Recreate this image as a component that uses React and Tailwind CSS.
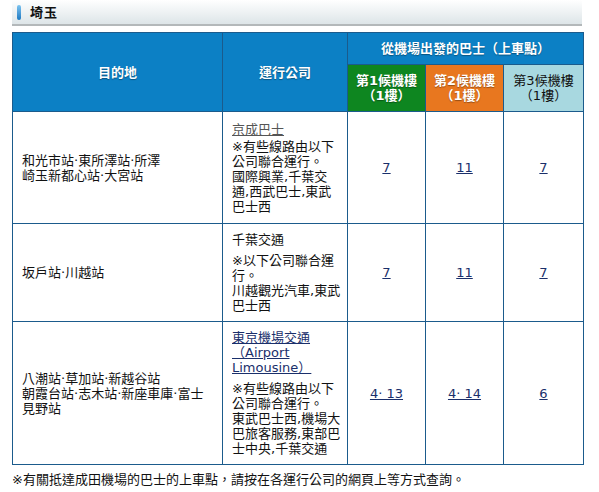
import React from 'react';

const font = { fontFamily: '"DejaVu Sans", "Noto Sans CJK TC", sans-serif' };

const rows = [
    {
        dest: ['和光市站‧東所澤站‧所澤', '崎玉新都心站‧大宮站'],
        company: '京成巴士',
        link: 'gray',
        note: ['※有些線路由以下', '公司聯合運行。', '國際興業,千葉交', '通,西武巴士,東武', '巴士西'],
        stops: ['7', '11', '7'],
        h: 'h-[112px]',
    },
    {
        dest: ['坂戶站‧川越站'],
        company: '千葉交通',
        link: null,
        note: ['※以下公司聯合運', '行。', '川越觀光汽車,東武', '巴士西'],
        stops: ['7', '11', '7'],
        h: 'h-[97px]',
    },
    {
        dest: ['八潮站‧草加站‧新越谷站', '朝霞台站‧志木站‧新座車庫‧富士', '見野站'],
        company: ['東京機場交通', '（Airport', 'Limousine）'],
        link: 'blue',
        note: ['※有些線路由以下', '公司聯合運行。', '東武巴士西,機場大', '巴旅客服務,東部巴', '士中央,千葉交通'],
        stops: ['4‧ 13', '4‧ 14', '6'],
        h: 'h-[142px]',
    },
];

const Lines = ({ lines }) => lines.map((l, i) => (
    <React.Fragment key={i}>
        {l}
        {i < lines.length - 1 && <br />}
    </React.Fragment>
));

const App = () => {
    return (
        <div className="w-[599px] h-[492px] bg-white text-[13px] leading-[15px] text-[#111]" style={font}>
            <div className="ml-3 w-[570px] h-[26px] flex items-center gap-[9px] pl-[5px] border-b-2 border-[#b3b8ba] bg-gradient-to-b from-white to-[#dde5e8]">
                <span className="w-[4px] h-[15px] rounded-full bg-gradient-to-b from-[#7cc4f0] to-[#1679c2]" />
                <span className="font-bold text-[#111] tracking-[1px]">埼玉</span>
            </div>

            <table className="ml-3 mt-[6px] w-[571px] border-collapse table-fixed">
                <colgroup>
                    <col className="w-[210px]" />
                    <col className="w-[125px]" />
                    <col className="w-[78px]" />
                    <col className="w-[78px]" />
                    <col className="w-[80px]" />
                </colgroup>
                <thead className="text-white font-bold [text-shadow:0_1px_1px_rgba(0,0,0,0.35)]">
                    <tr className="h-[32px]">
                        <th rowSpan={2} className="border border-[#1b5b8c] bg-[#0c80c5] font-bold">目的地</th>
                        <th rowSpan={2} className="border border-[#1b5b8c] bg-[#0c80c5] font-bold">運行公司</th>
                        <th colSpan={3} className="border border-[#1b5b8c] bg-[#0c80c5] font-bold">從機場出發的巴士（上車點）</th>
                    </tr>
                    <tr className="h-[47px]">
                        <th className="border border-[#1b5b8c] bg-[#0e8620] font-bold">第1候機樓<br />（1樓）</th>
                        <th className="border border-[#1b5b8c] bg-[#e8771f] font-bold">第2候機樓<br />（1樓）</th>
                        <th className="border border-[#1b5b8c] bg-[#a8d8e0] font-normal text-[#111] [text-shadow:none]">第3候機樓<br />（1樓）</th>
                    </tr>
                </thead>
                <tbody>
                    {rows.map((r, i) => (
                        <tr key={i} className={r.h}>
                            <td className="border border-[#1b5b8c] px-[9px] align-middle whitespace-nowrap">
                                <Lines lines={r.dest} />
                            </td>
                            <td className="border border-[#1b5b8c] px-[9px] py-[8px] align-middle whitespace-nowrap">
                                {r.link === 'gray' && (
                                    <a className="underline text-[#555]">{r.company}</a>
                                )}
                                {r.link === 'blue' && (
                                    <a className="underline text-[#1a2f6b]"><Lines lines={r.company} /></a>
                                )}
                                {!r.link && <span>{r.company}</span>}
                                <p className={r.link === 'gray' ? 'mt-[2px]' : 'mt-[6px]'}>
                                    <Lines lines={r.note} />
                                </p>
                            </td>
                            {r.stops.map((s, j) => (
                                <td key={j} className="border border-[#1b5b8c] text-center align-middle">
                                    <a className="underline text-[#1a2f6b]">{s}</a>
                                </td>
                            ))}
                        </tr>
                    ))}
                </tbody>
            </table>

            <p className="ml-3 mt-[7px]">※有關抵達成田機場的巴士的上車點，請按在各運行公司的網頁上等方式查詢。</p>
        </div>
    );
};

export default App;
